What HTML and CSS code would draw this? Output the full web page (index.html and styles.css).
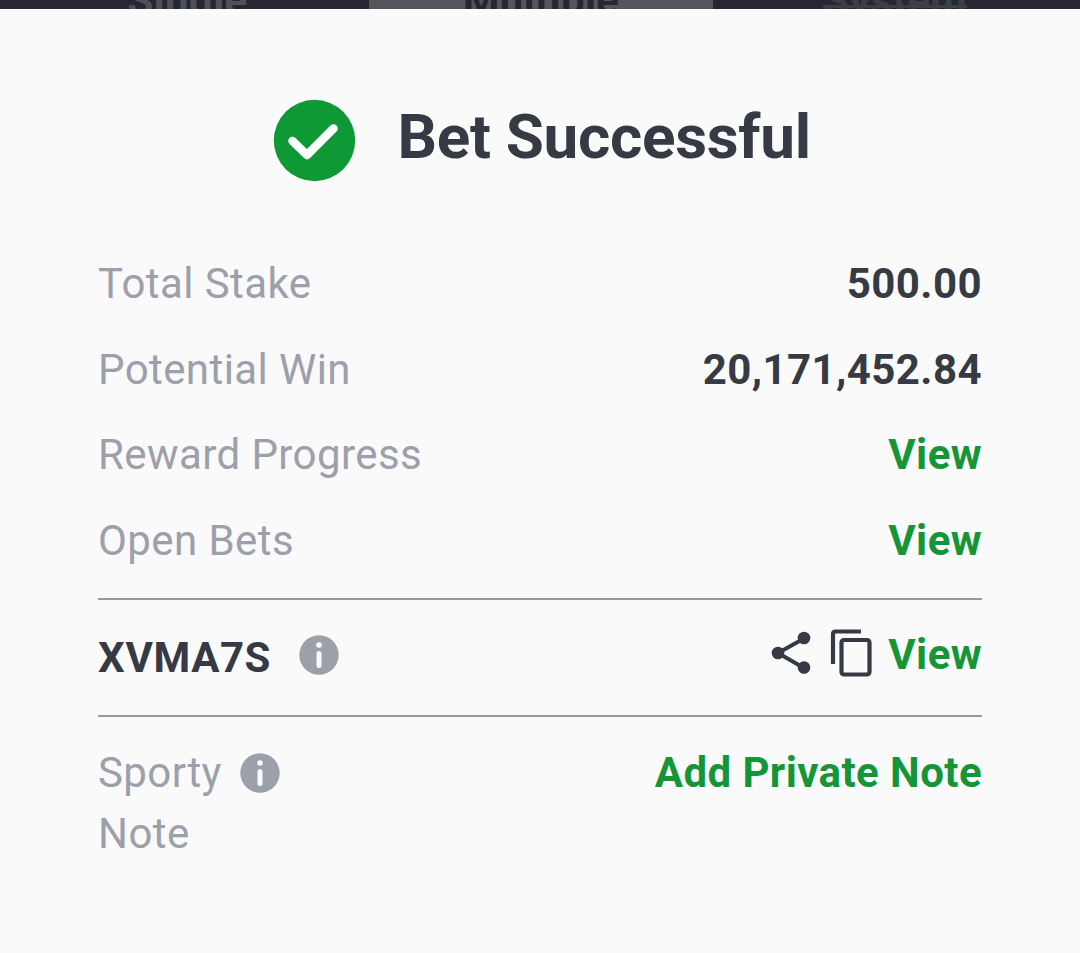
FILE: index.html
```
<!DOCTYPE html>
<html lang="en">
<head>
<meta charset="utf-8">
<title>Bet Successful</title>
<link rel="stylesheet" href="styles.css">
</head>
<body>
<nav class="tabs"><span class="tab">Single</span><span class="tab tab-active">Multiple</span><span class="tab tab-disabled">System</span></nav>
<main class="dialog">
<header class="heading">
<svg class="check" viewBox="0 0 82 82"><circle cx="41.500" cy="40.500" r="40.700" fill="#0f9836"/><path d="M19.500 41 34 55 60.500 28.500" fill="none" stroke="#fff" stroke-width="8.500" stroke-linecap="round" stroke-linejoin="round"/></svg>
<h1 class="title">Bet Successful</h1>
</header>
<div class="row"><span class="label">Total Stake</span><span class="value">500.00</span></div>
<div class="row"><span class="label">Potential Win</span><span class="value">20,171,452.84</span></div>
<div class="row"><span class="label">Reward Progress</span><a class="link">View</a></div>
<div class="row"><span class="label">Open Bets</span><a class="link">View</a></div>
<section class="booking">
<span class="code">XVMA7S</span>
<svg class="info" viewBox="0 0 40 40"><circle cx="20" cy="20" r="19.700" fill="#9ca0ab"/><circle cx="20" cy="10" r="2.800" fill="#fafafa"/><path d="M20 18.500V30.500" stroke="#fafafa" stroke-width="5" stroke-linecap="round"/></svg>
<svg class="share" viewBox="0 0 40 44"><path d="M33 7.500 7 22 33 37" fill="none" stroke="#353a45" stroke-width="4"/><g fill="#353a45"><circle cx="33" cy="7" r="6.300"/><circle cx="7" cy="22" r="6.300"/><circle cx="33" cy="36.500" r="6.300"/></g></svg>
<svg class="copy" viewBox="0 0 42 48"><g fill="none" stroke="#353a45" stroke-width="4.200"><path d="M3 35V5Q3 2.500 5.500 2.500H31"/><rect x="11.500" y="11" width="28" height="34.500" rx="2.500"/></g></svg>
<a class="link">View</a>
</section>
<section class="note">
<span class="label note-label">Sporty Note</span>
<svg class="info" viewBox="0 0 40 40"><circle cx="20" cy="20" r="19.700" fill="#9ca0ab"/><circle cx="20" cy="10" r="2.800" fill="#fafafa"/><path d="M20 18.500V30.500" stroke="#fafafa" stroke-width="5" stroke-linecap="round"/></svg>
<a class="link">Add Private Note</a>
</section>
</main>
</body>
</html>
```
FILE: styles.css
```
* { box-sizing: border-box; }
body { margin: 0; height: 953px; overflow: hidden; background: #fafafa; font-family: Roboto, sans-serif; font-size: 42px; color: #353a45; }
.tabs { display: grid; grid-template-columns: 369px 344px 367px; height: 9px; overflow: hidden; background: #252832; }
.tab { height: 9px; line-height: 2px; text-align: center; color: #505158; font-weight: 700; letter-spacing: .3px; padding-left: 6px; }
.tab-active { background: #55565b; color: #252832; padding-left: 0; }
.tab-disabled { color: #3d3f48; padding: 0 3px 0 0; text-decoration: underline; text-decoration-thickness: 3px; text-underline-offset: -10px; text-decoration-skip-ink: none; }
.dialog { padding: 88px 98px 0 98px; }
.heading { display: flex; align-items: flex-start; height: 144px; padding: 2px 0 0 175px; }
.check { width: 82px; height: 82px; margin: 1px 42.500px 0 0; overflow: visible; }
.title { margin: 0; font-size: 62px; line-height: 76px; font-weight: 700; letter-spacing: -.3px; white-space: nowrap; }
.row { display: flex; justify-content: space-between; align-items: center; height: 85.600px; }
.label { color: #9ca0ab; letter-spacing: .42px; }
.value { font-weight: 700; letter-spacing: .42px; }
.link { color: #149638; font-weight: 700; letter-spacing: .42px; margin-left: auto; }
.booking { display: flex; align-items: center; height: 119px; margin-top: 14.600px; border-top: 2px solid #97999e; border-bottom: 2px solid #97999e; }
.code { font-weight: 700; letter-spacing: .55px; }
.info { width: 40px; height: 40px; flex: none; margin: 0 0 5px 28px; }
.share { width: 40px; height: 44px; margin: 0 0 9px auto; }
.copy { width: 42px; height: 48px; margin: 0 0 9px 18.500px; }
.booking .link { margin-left: 16.500px; margin-bottom: 6px; }
.note { display: flex; align-items: flex-start; padding-top: 25.400px; line-height: 61px; }
.note-label { width: 123px; }
.note .info { margin: 11px 0 0 18.500px; }
```
